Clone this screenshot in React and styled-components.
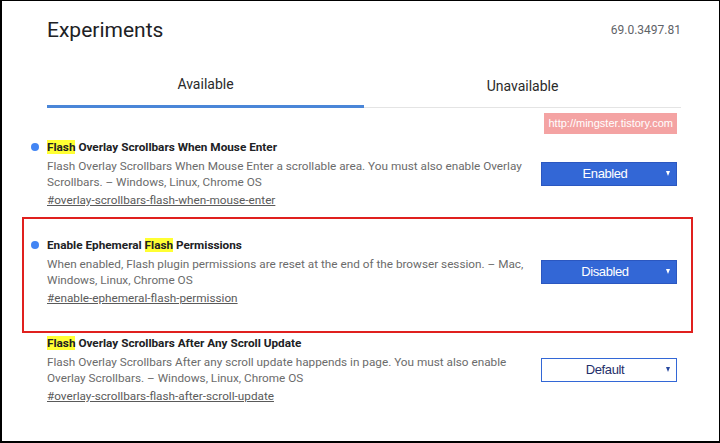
import React from 'react'
import styled, { createGlobalStyle } from 'styled-components'

const GlobalStyle = createGlobalStyle`
    html, body {
        margin: 0;
        padding: 0;
        background: #fff;
    }
    * {
        box-sizing: border-box;
    }
`

const Frame = styled.div`
    width: 720px;
    height: 443px;
    border-style: solid;
    border-color: #000;
    border-width: 1px 1px 2px 2px;
    padding: 0 38px 0 45px;
    background: #fff;
    font-family: Roboto, "Liberation Sans", sans-serif;
    overflow: hidden;
`

const Header = styled.div`
    display: flex;
    justify-content: space-between;
    align-items: center;
    height: 58px;
    padding-bottom: 1px;
`

const Title = styled.h1`
    margin: 0;
    font-size: 21px;
    font-weight: 400;
    color: #202124;
`

const Version = styled.span`
    font-size: 12px;
    color: #5f6368;
`

const Tabs = styled.div`
    display: flex;
`

const Tab = styled.div`
    flex: 1;
    height: 49px;
    display: flex;
    align-items: center;
    justify-content: center;
    font-size: 14px;
    color: #2a2a2a;
    border-bottom: ${props => props.active ? '3px solid #4a86d8' : '1px solid #e4e4e4'};
    padding-top: ${props => props.active ? '4px' : '5px'};
`

const WatermarkRow = styled.div`
    display: flex;
    justify-content: flex-end;
    margin-top: 5px;
    padding-right: 4px;
`

const Watermark = styled.span`
    background: #f4a3a3;
    color: #fff;
    font-family: "Liberation Sans", Arial, sans-serif;
    font-size: 11px;
    line-height: 21px;
    padding: 0 4px;
`

const List = styled.div`
    margin-top: 5px;
`

const Item = styled.div`
    position: relative;
    display: flex;
    align-items: center;
    justify-content: space-between;
    padding-bottom: 29px;

    ${props => props.highlighted && `
        &::after {
            content: '';
            position: absolute;
            left: -25px;
            right: -12px;
            top: -20px;
            bottom: 2px;
            border: 2px solid #e0201e;
            pointer-events: none;
        }
    `}
`

const Text = styled.div`
    width: 485px;
`

const Name = styled.div`
    position: relative;
    font-size: 11.75px;
    font-weight: 700;
    line-height: 16px;
    color: #202124;
    margin-bottom: 3px;

    ${props => props.enabled && `
        &::before {
            content: '';
            position: absolute;
            left: -16px;
            top: 4px;
            width: 8px;
            height: 8px;
            border-radius: 50%;
            background: #4285f4;
        }
    `}
`

const Mark = styled.mark`
    background: #ffff33;
    color: inherit;
`

const Description = styled.p`
    margin: 0;
    font-size: 11.75px;
    line-height: 16px;
    color: #6b6b6b;
`

const Permalink = styled.a`
    display: block;
    margin-top: 2px;
    font-size: 11.75px;
    line-height: 16px;
    color: #5a5a5a;
    text-decoration: underline;
`

const Select = styled.div`
    position: relative;
    width: 136px;
    height: 24px;
    display: flex;
    align-items: center;
    justify-content: center;
    border: 1px solid ${props => props.filled ? '#2b57c0' : '#3367d6'};
    background: ${props => props.filled ? '#3367d6' : '#fff'};
    color: ${props => props.filled ? '#fff' : '#1f2f6a'};
    font-family: "Liberation Sans", Arial, sans-serif;
    font-size: 13px;
    letter-spacing: -0.4px;
    padding-right: 8px;
    margin-right: 4px;
`

const Arrow = styled.span`
    position: absolute;
    right: 6px;
    top: 8px;
    width: 0;
    height: 0;
    border-left: 2.5px solid transparent;
    border-right: 2.5px solid transparent;
    border-top: 5px solid ${props => props.light ? '#fff' : '#2a4aa0'};
`

const experiments = [
    {
        before: '',
        after: ' Overlay Scrollbars When Mouse Enter',
        description: 'Flash Overlay Scrollbars When Mouse Enter a scrollable area. You must also enable Overlay Scrollbars. – Windows, Linux, Chrome OS',
        link: '#overlay-scrollbars-flash-when-mouse-enter',
        value: 'Enabled',
        enabled: true,
    },
    {
        before: 'Enable Ephemeral ',
        after: ' Permissions',
        description: 'When enabled, Flash plugin permissions are reset at the end of the browser session. – Mac, Windows, Linux, Chrome OS',
        link: '#enable-ephemeral-flash-permission',
        value: 'Disabled',
        enabled: true,
        highlighted: true,
    },
    {
        before: '',
        after: ' Overlay Scrollbars After Any Scroll Update',
        description: 'Flash Overlay Scrollbars After any scroll update happends in page. You must also enable Overlay Scrollbars. – Windows, Linux, Chrome OS',
        link: '#overlay-scrollbars-flash-after-scroll-update',
        value: 'Default',
        enabled: false,
    },
]

function App() {
  return (
    <>
        <GlobalStyle />
        <Frame>
            <Header>
                <Title>Experiments</Title>
                <Version>69.0.3497.81</Version>
            </Header>

            <Tabs>
                <Tab active>Available</Tab>
                <Tab>Unavailable</Tab>
            </Tabs>

            <WatermarkRow>
                <Watermark>http://mingster.tistory.com</Watermark>
            </WatermarkRow>

            <List>
                {experiments.map(exp => (
                    <Item key={exp.link} highlighted={exp.highlighted}>
                        <Text>
                            <Name enabled={exp.enabled}>
                                {exp.before}<Mark>Flash</Mark>{exp.after}
                            </Name>
                            <Description>{exp.description}</Description>
                            <Permalink href={exp.link}>{exp.link}</Permalink>
                        </Text>
                        <Select filled={exp.value !== 'Default'}>
                            {exp.value}
                            <Arrow light={exp.value !== 'Default'} />
                        </Select>
                    </Item>
                ))}
            </List>
        </Frame>
    </>
  )
}

export default App
